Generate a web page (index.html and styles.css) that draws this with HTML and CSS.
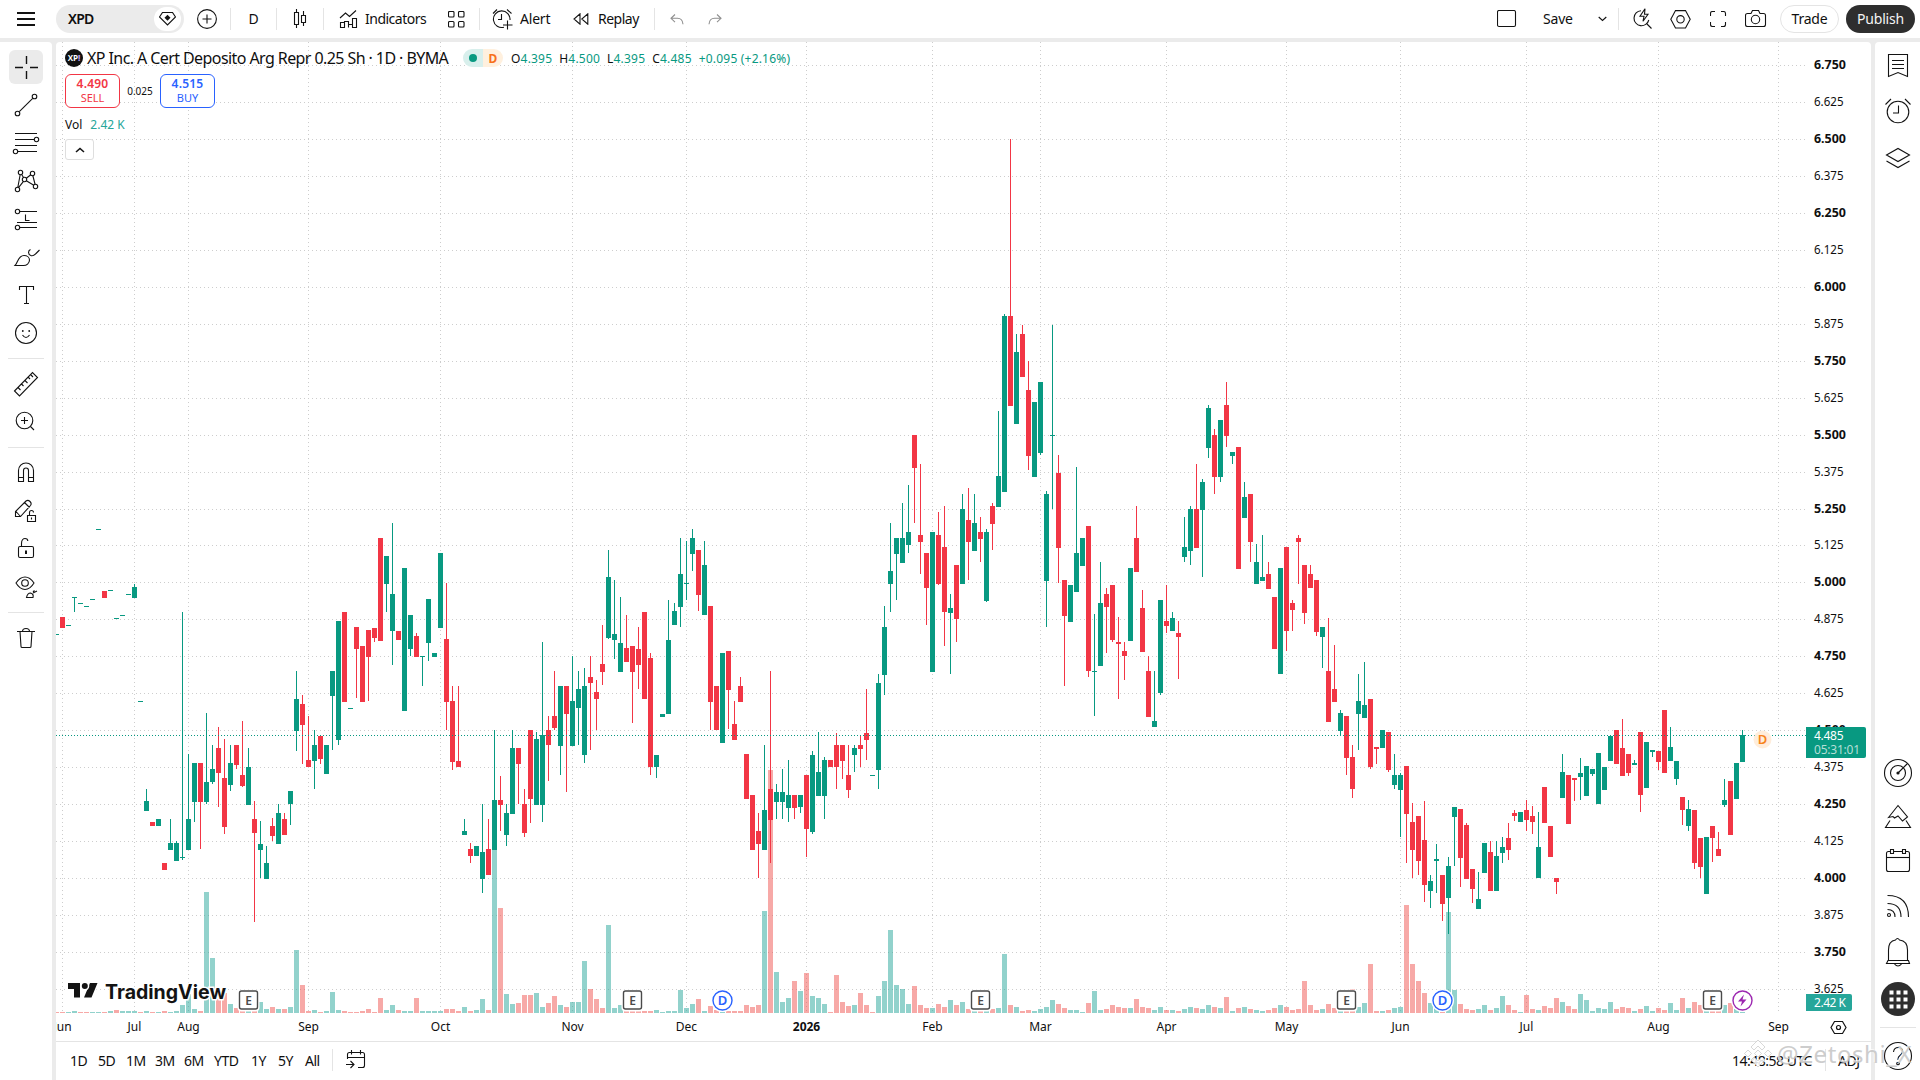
FILE: index.html
```html
<!DOCTYPE html>
<html lang="en">
<head>
<meta charset="utf-8">
<title>XPD 4.485 ▲ +2.16%</title>
<link rel="stylesheet" href="styles.css">
</head>
<body>
<div class="app">
  <header class="topbar">
    <button class="t-item menu"><svg width="20" height="16"><path class="thick" d="M1 2h18M1 8h18M1 14h18"/></svg></button>
    <div class="search"><span class="symbol">XPD</span><span class="gem"><svg width="17" height="14"><path d="M3.500 .5h10l3 4.500-8 8-8-8z"/><path class="fill" d="M8.500 2.800l3 3-3 3-3-3z"/></svg></span></div>
    <button class="t-item add"><svg width="20" height="20"><circle cx="10" cy="10" r="9.400"/><path d="M10 5.500v9M5.500 10h9"/></svg></button>
    <i class="vsep"></i>
    <button class="t-item interval"><span class="txt">D</span></button>
    <i class="vsep"></i>
    <button class="t-item kind"><svg width="14" height="20"><path d="M3.500 0v3M3.500 15v4M1.500 3.500h4v12h-4zM10.500 2v4M10.500 13v4M8.500 6.500h4v7h-4z"/></svg></button>
    <i class="vsep"></i>
    <button class="t-item indicators"><svg width="19" height="19"><path d="M1.500 17.500v-5h4v5zM5.500 17.500v-6h4v6M9.500 17.500v-3h4v3M13.500 17.500v-9h4v9zM1 8l5.500-5 4 3.500 6.500-6"/></svg><span class="txt">Indicators</span></button>
    <button class="t-item layouts"><svg width="17" height="17"><rect x=".5" y=".5" width="5.500" height="5.500" rx="1"/><rect x="10.500" y=".5" width="5.500" height="5.500" rx="1"/><rect x=".5" y="10.500" width="5.500" height="5.500" rx="1"/><rect x="10.500" y="10.500" width="5.500" height="5.500" rx="1"/></svg></button>
    <i class="vsep"></i>
    <button class="t-item alert"><svg width="21" height="21"><path d="M12 18.200A8.300 8.300 0 1 1 18 11M1 4.500l4-4M15 .5l4.500 4M9.500 5v5.500H6M15.500 11.500v9M11 16h9.500"/></svg><span class="txt">Alert</span></button>
    <button class="t-item replay"><svg width="16" height="12"><path d="M7 .8v10.400L1 6zM14.800 .8v10.400L8.800 6z"/></svg><span class="txt">Replay</span></button>
    <i class="vsep"></i>
    <button class="t-item undo"><svg width="14" height="11"><path d="M5 .5l-4 3.800 4 3.800M1 4.300h6.500q5 0 5.500 6"/></svg></button>
    <button class="t-item redo"><svg width="14" height="11"><path d="M9 .5l4 3.800-4 3.800M13 4.300H6.500q-5 0-5.500 6"/></svg></button>
    <span class="spring"></span>
    <button class="t-item single"><svg width="20" height="18"><rect x=".5" y=".5" width="18" height="16" rx="1.500"/></svg></button>
    <button class="t-item save"><span class="txt">Save</span></button>
    <button class="t-item caret"><svg width="9" height="6"><path d="M.7 1l3.800 3.500L8.300 1"/></svg></button>
    <i class="vsep"></i>
    <button class="t-item quick"><svg width="20" height="22"><path d="M8 2.700A7.500 7.500 0 1 0 15.800 12M14 16l4.500 4.500M12 .8L7 8.300h4l-1 5 5-7h-3.500z"/></svg></button>
    <button class="t-item settings"><svg width="21" height="19"><path d="M5.500 .6h10l4.700 8.700-4.700 8.700h-10L.8 9.300z"/><circle cx="10.500" cy="9.300" r="3.700"/></svg></button>
    <button class="t-item full"><svg width="17" height="17"><path d="M.5 5V2.500q0-2 2-2H5M11 .5h2.500q2 0 2 2V5M15.500 11v2.500q0 2-2 2H11M5 15.500H2.500q-2 0-2-2V11"/></svg></button>
    <button class="t-item camera"><svg width="22" height="18"><path d="M2.500 3.500H6l1.500-3h6l1.500 3h3.500q2 0 2 2v9q0 2-2 2h-16q-2 0-2-2v-9q0-2 2-2z"/><circle cx="10.500" cy="9.500" r="4.200"/></svg></button>
    <button class="pill trade"><span class="txt">Trade</span></button>
    <button class="pill publish"><span class="txt">Publish</span></button>
  </header>

  <div class="workspace">
    <nav class="tools">
      <button class="tool active"><svg><path class="mid" d="M17.500 6v8M17.500 21v8M6 17.500h8M21 17.500h8"/></svg></button>
      <button class="tool"><svg><circle cx="8.500" cy="25.500" r="2.300"/><circle cx="25.500" cy="8.500" r="2.300"/><path d="M10.300 23.700L23.700 10.300"/></svg></button>
      <button class="tool"><svg><path d="M6 7.500h22M6 13.500h19M6 19.500h22M9 25.500h19"/><circle cx="27.500" cy="13.500" r="2.200"/><circle cx="6.500" cy="25.500" r="2.200"/></svg></button>
      <button class="tool"><svg><path d="M11.200 10.500L8.800 23.500M12.500 10.300l2.200 3.500M9.500 23.700l5-6.300M17.300 14.300l4.500-3.500M23.800 11.500l2.300 9M17.300 16.700l7.500 4.600"/><circle cx="11.500" cy="8.500" r="2.200"/><circle cx="23.500" cy="9.500" r="2.200"/><circle cx="15.500" cy="15.500" r="2.200"/><circle cx="8.500" cy="25.500" r="2.200"/><circle cx="26.500" cy="22.500" r="2.200"/></svg></button>
      <button class="tool"><svg><path d="M10.500 9.500H28M16.500 12.500v6h4M8 20.500h20M10.500 25.500H28"/><circle cx="8.500" cy="9.500" r="2.200"/><circle cx="8.500" cy="25.500" r="2.200"/></svg></button>
      <button class="tool"><svg><path d="M6 25.500C9 22.500 9 15.500 15 15.500c3.200 0 5.500 2 5.500 4.500 0 3.500-3 5.500-6 5.500zM21.500 9.500c-2.500 1-3 5 .8 6.200 2 .6 3.700-1.200 4.700-2.200l3.500-3.500"/></svg></button>
      <button class="tool"><svg><path d="M10.500 12V8.500h14V12M17.500 8.500v17M15 25.500h5"/></svg></button>
      <button class="tool"><svg><circle cx="17" cy="17" r="10.500"/><path d="M13.500 19q3.500 5 7 0"/><circle class="fill" cx="13.800" cy="15" r=".9"/><circle class="fill" cx="20.200" cy="15" r=".9"/></svg></button>
      <i class="hsep"></i>
      <button class="tool"><svg><path d="M5.500 24L23.500 5.500l5 5L10.500 29zM9 20.500l2.500 2.500M12.500 17l2 2M16 13.500l2.500 2.500M19 10l2 2M22 8l2 2"/></svg></button>
      <button class="tool"><svg><circle cx="15.500" cy="15.500" r="8.300"/><path d="M21.500 21.500l3.500 3.500M15.500 12v7M12 15.500h7"/></svg></button>
      <i class="hsep"></i>
      <button class="tool"><svg><path d="M9.500 25.500v-11a7.500 7.500 0 0 1 15 0v11h-5v-11a2.500 2.500 0 0 0-5 0v11zM9.500 21.500h5M19.500 21.500h5"/></svg></button>
      <button class="tool"><svg><path d="M6.500 22.500v-5L17 7q2-1.500 4 .5t.5 4L11.500 22.500zM15.500 8.500l5 5M7 17.500l4.500 5"/><path class="paper" d="M18.500 21.500h8v6h-8zM20.500 21.500v-3q0-2 2-2t2 2M22.500 23.500v2"/></svg></button>
      <button class="tool"><svg><rect x="9.500" y="14.500" width="15" height="11" rx="1.500"/><path d="M12.500 14.500v-3c0-4 2-5 3.500-5s2.800 1 2.800 2.500"/><path class="thick" d="M17 18.500v3.500"/></svg></button>
      <button class="tool"><svg><path d="M7 13q4-6 9-6t9 6q-4 6.500-9 6.500T7 13z"/><circle cx="16" cy="13" r="3.300"/><path d="M17.500 27.500q1-4.500 4-4.500 3.500 1 2.500 4.500zM24 23l4-2M24 22l1.500-1.500"/></svg></button>
      <i class="hsep"></i>
      <button class="tool"><svg><path d="M8 10.500h18M11 10.500l1 15q0 1 1.200 1h7.600q1.200 0 1.200-1l1-15M13.500 10.500q0-3 3.500-3t3.500 3"/></svg></button>
    </nav>

    <main class="chart">
      <svg id="plot" class="plot" width="1815" height="999" viewBox="56 42 1815 999"></svg>
      <section class="legend">
        <div class="legend-title">
          <span class="logo">XP<b>!</b></span><h1>XP Inc. A Cert Deposito Arg Repr 0.25 Sh · 1D · BYMA</h1>
          <span class="status"><i class="open"><b></b></i><i class="delayed">D</i></span>
          <span class="ohlc"><span>O<b>4.395</b></span><span>H<b>4.500</b></span><span>L<b>4.395</b></span><span>C<b>4.485</b></span><b>+0.095 (+2.16%)</b></span>
        </div>
        <div class="quotes">
          <button class="quote sell"><strong>4.490</strong>SELL</button>
          <span class="spread">0.025</span>
          <button class="quote buy"><strong>4.515</strong>BUY</button>
        </div>
        <div class="vol">Vol<b>2.42 K</b></div>
        <button class="collapse"><svg width="10" height="6"><path class="bold" d="M1 5l4-3.500L9 5"/></svg></button>
      </section>
      <footer class="bottombar">
        <span class="r1">1D</span><span class="r2">5D</span><span class="r3">1M</span><span class="r4">3M</span><span class="r5">6M</span><span class="r6">YTD</span><span class="r7">1Y</span><span class="r8">5Y</span><span class="r9">All</span>
        <i class="vsep"></i>
        <svg class="goto" width="20" height="20"><path d="M1.500 9V4.500q0-2 2-2h13q2 0 2 2v11q0 2-2 2H12M1.500 7.500h17M5.500 0v4.500M14.500 0v4.500M0 14.500h7.500M4.500 11l3.500 3.500L4.500 18"/></svg>
        <span class="spring"></span>
        <span class="clock">14:48:58 UTC</span><i class="vsep short"></i><span class="adj">ADJ</span>
      </footer>
    </main>

    <aside class="side">
      <button><svg><path d="M13.500 11.500h19v22l-9.500-4-9.500 4zM17 17.500h12M17 21.500h12M17 25.500h12"/></svg></button>
      <button><svg><circle cx="23" cy="23" r="10.800"/><path d="M23.500 16.500v7.500H18M10.500 15.500l5.500-5.500M30 10l5.500 5.500"/></svg></button>
      <button><svg><path d="M11.500 21L23 14.500 34.500 21 23 27.500zM11.500 27L23 33.500 34.500 27"/></svg></button>
      <span class="spring"></span>
      <button><svg><circle cx="23" cy="22" r="13.500"/><circle cx="23" cy="22" r="7.500"/><circle class="fill" cx="23" cy="22" r="1.600"/><path d="M23 22l9.500-9.500"/></svg></button>
      <button><svg><path d="M13.500 22.500L23 10.500l9.500 11.500-5 4-4.500-5-3.500 2-1.500-1.500zM15 25.500l-4.500 7h25l-4.500-7"/></svg></button>
      <button><svg><rect x="11.500" y="12.500" width="23" height="20" rx="2"/><path d="M11.500 18.500h23"/><path class="paper" d="M15.500 10.500h3v4h-3zM27.500 10.500h3v4h-3z"/></svg></button>
      <button><svg><circle cx="14" cy="32" r="1.500"/><path d="M12.500 26.500q7.500 0 7.500 7.500M12.500 20.500q13.500 0 13.500 13.500M12.500 12.500q21 0 21 21.500"/></svg></button>
      <button class="bell"><svg><path d="M13.500 33.500V23q0-9 7-10 2-3 4 0 8 1 8 10v10.500M13 33.500h20.500l1 3H11.500zM19.500 37q3.500 4 7 0"/></svg></button>
      <button class="apps"><svg><circle class="disc" cx="23" cy="28" r="17"/><g class="dots"><path d="M14.500 19.500h4v4h-4zM21.500 19.500h4v4h-4zM28.500 19.500h4v4h-4zM14.500 26.500h4v4h-4zM21.500 26.500h4v4h-4zM28.500 26.500h4v4h-4zM14.500 33.500h4v4h-4zM21.500 33.500h4v4h-4zM28.500 33.500h4v4h-4z"/></g></svg></button>
      <i class="hsep"></i>
      <button class="help"><svg><circle cx="23" cy="28" r="13.500"/><path d="M18.500 24q.5-4.500 4.800-4.500 4.200 0 4.200 4 0 2.200-2.500 4-2 1.500-2 3.500v1"/><circle cx="23" cy="35.500" r="1.300"/></svg></button>
    </aside>
  </div>
  <div class="stamp"><svg width="30" height="30"><path d="M15 1l7 7-3 3-4-4-4 4-3-3zM5 11l3.500 3.500L5 18l-3.500-3.500zM25 11l3.500 3.500L25 18l-3.500-3.500zM15 11l3.500 3.500L15 18l-3.500-3.500zM8 21l3-3 4 4 4-4 3 3-7 7z"/></svg><span>@Zetoshi_X</span></div>
</div>
<script src="chart.js"></script>
</body>
</html>
```
FILE: styles.css
```css
* { box-sizing: border-box; }
body { margin: 0; width: 1920px; height: 1080px; overflow: hidden; background: #ebebeb; color: #0f0f0f; font-family: "Noto Sans", "Open Sans", sans-serif; font-stretch: 87.5%; }
button { border: 0; padding: 0; margin: 0; background: none; font: inherit; color: inherit; display: flex; align-items: center; flex: none; }
svg { display: block; flex: none; fill: none; stroke: #131313; stroke-width: 1.1; }
svg .thick { stroke-width: 2; }
svg .mid { stroke-width: 1.4; }
svg .bold { stroke-width: 1.6; }
svg .fill { fill: #131313; stroke: none; }
svg .paper { fill: #fff; }
.app { position: relative; width: 1920px; height: 1080px; display: flex; flex-direction: column; gap: 4px; }
.spring { flex: 1; }
.vsep { width: 1px; height: 22px; background: #e4e4e4; flex: none; }
.hsep { width: 36px; height: 1px; background: #e4e4e4; flex: none; }

.topbar { height: 38px; background: #fff; display: flex; align-items: center; font-size: 14px; padding-right: 5px; }
.txt { display: block; white-space: nowrap; letter-spacing: -.2px; padding-bottom: 1px; }
.menu { width: 56px; padding-left: 16px; }
.search { width: 128px; height: 28px; border-radius: 14px; background: #ebebeb; display: flex; align-items: center; justify-content: space-between; padding: 0 3px 0 12px; flex: none; }
.symbol { font-weight: 600; letter-spacing: -.8px; padding-bottom: 1px; }
.gem { width: 27px; height: 24px; border-radius: 12px; background: #fff; display: flex; align-items: center; justify-content: center; }
.add { width: 46px; justify-content: center; padding-right: 1px; }
.interval { width: 45px; justify-content: center; }
.kind { width: 46px; justify-content: center; }
.indicators { width: 114px; padding-left: 15px; gap: 7px; }
.indicators .txt { letter-spacing: -.5px; }
.layouts { width: 41px; padding-left: 10px; }
.alert { width: 82px; padding-left: 12px; gap: 7px; }
.replay { width: 92px; padding-left: 11px; gap: 9px; }
.replay .txt { letter-spacing: -.5px; }
.undo { width: 38px; padding-left: 15px; }
.redo { width: 38px; padding-left: 15px; }
.undo svg, .redo svg { stroke: #8f8f8f; }
.single { width: 46px; }
.save { width: 55px; }
.caret { width: 20px; }
.quick { width: 37px; padding-left: 14px; }
.settings { width: 40px; padding-left: 14px; }
.full { width: 36px; padding-left: 14px; }
.camera { width: 48px; padding-left: 13px; }
.pill { height: 28px; border-radius: 14px; justify-content: center; }
.trade { width: 59px; border: 1px solid #e4e4e4; margin-right: 7px; }
.publish { width: 69px; background: #2e2e2e; color: #f5f5f5; }

.workspace { flex: 1; display: flex; gap: 4px; min-height: 0; }
.tools { width: 52px; background: #fff; border-radius: 0 4px 0 0; display: flex; flex-direction: column; align-items: center; gap: 4px; padding-top: 8px; }
.tools .hsep { margin: 4px 0; }
.tool { width: 34px; height: 34px; border-radius: 6px; }
.tool.active { background: #ebebeb; }
.tool svg { width: 34px; height: 34px; }
.side { width: 45px; background: #fff; border-radius: 4px 0 0 0; display: flex; flex-direction: column; align-items: center; padding-top: 1px; }
.side button, .side button svg { width: 45px; height: 44px; }
.side button:nth-child(2) { margin-top: 2px; }
.side button:nth-child(3) { margin-top: 1px; }
.side .bell svg { overflow: visible; }
.side .apps, .side .apps svg { height: 56px; }
.side .help, .side .help svg { height: 52px; }
.disc { fill: #2e2e2e; stroke: none; }
.dots { fill: #fff; stroke: none; }

.chart { position: relative; width: 1815px; background: #fff; border-radius: 4px 4px 0 0; display: flex; flex-direction: column; }
.plot { stroke: none; }
.plot text { font-size: 12px; fill: #0f0f0f; stroke: none; }
.plot .strong { font-weight: 700; }
.plot .hgrid, .plot .vgrid { stroke: #cdcdcd; stroke-width: 1; stroke-dasharray: 1 3; }
.plot .last { stroke: #089981; stroke-width: 1; stroke-dasharray: 1 2; }
.plot .up { fill: #089981; }
.plot .down { fill: #f23645; }
.plot .vup { fill: #26a69a; opacity: .5; }
.plot .vdown { fill: #ef5350; opacity: .5; }
.plot .brand { font: 700 20px Inter, sans-serif; fill: #131313; stroke: #fff; stroke-width: 3; paint-order: stroke; }
.plot .mark { fill: #131313; stroke: #fff; stroke-width: 3; paint-order: stroke; }
.plot .flag { fill: #fff; stroke: #4a4a4a; stroke-width: 1.4; }
.plot .halo { fill: #fff; }
.plot .flag-d { stroke: #2962ff; }
.plot .flag-z { stroke: #9c27b0; }
.plot .badge-text { font-size: 12px; font-weight: 600; fill: #4a4a4a; text-anchor: middle; }
.plot .badge-text.blue { fill: #2962ff; font-size: 13px; }
.plot .badge-text.orange { fill: #f7831b; font-size: 13px; }
.plot .bolt { fill: #9c27b0; }
.plot .cream { fill: #ffeddb; }
.plot .teal { fill: #26a69a; }
.plot .on { fill: #fff; }
.plot .dim { fill: #b5ded6; }
.plot .gear { fill: none; stroke: #131313; stroke-width: 1.2; }

.legend { position: absolute; left: 9px; top: 6px; }
.legend-title { display: flex; align-items: center; height: 20px; }
.logo { width: 18px; height: 18px; border-radius: 9px; background: #111; color: #fff; font: 700 8px/18px "Open Sans", sans-serif; text-align: center; }
.logo b { color: #b59af0; }
h1 { margin: 0 0 0 4px; width: 376px; font-size: 16px; font-weight: 400; letter-spacing: -.58px; white-space: nowrap; }
.status { display: flex; width: 40px; height: 18px; border-radius: 9px; overflow: hidden; font-size: 12px; }
.status i { width: 20px; display: flex; align-items: center; justify-content: center; font-style: normal; font-weight: 700; }
.open { background: #d8efec; }
.open b { width: 8px; height: 8px; border-radius: 4px; background: #089981; }
.delayed { background: #fff0de; color: #f7701b; }
.ohlc { display: flex; gap: 7px; margin-left: 8px; font-size: 12px; letter-spacing: .2px; white-space: nowrap; }
.ohlc b, .vol b { font-weight: 400; color: #089981; }
.quotes { display: flex; align-items: center; margin-top: 6px; }
.quote { width: 55px; height: 34px; flex-direction: column; justify-content: center; border: 1px solid; border-radius: 6px; background: #fff; font-size: 11px; line-height: 14px; }
.quote strong { font-size: 12px; font-weight: 600; letter-spacing: .2px; }
.sell { color: #f23645; }
.buy { color: #2962ff; }
.spread { width: 40px; text-align: center; font-size: 10px; }
.vol { margin-top: 8px; font-size: 12px; line-height: 18px; }
.vol b { margin-left: 8px; color: #26a69a; }
.collapse { margin-top: 5px; width: 29px; height: 21px; border: 1px solid #dedede; border-radius: 3px; background: #fff; justify-content: center; }

.bottombar { height: 39px; border-top: 1px solid #e4e4e4; display: flex; align-items: center; font-size: 14px; letter-spacing: -.5px; white-space: nowrap; padding-left: 14px; padding-right: 9px; padding-bottom: 2px; }
.bottombar span:not(.spring) { flex: none; }
.r1, .r2 { width: 28px; } .r3, .r4 { width: 29px; } .r5 { width: 30px; } .r6 { width: 37px; } .r7, .r8 { width: 27px; } .r9 { width: 27px; }
.goto { margin-left: 13px; }
.clock { width: 93px; }
.short { height: 22px; margin-right: 12px; }
.adj { width: 24px; }
.stamp { position: absolute; left: 1743px; top: 1037px; width: 177px; display: flex; align-items: center; gap: 4px; overflow: hidden; color: rgba(196,196,196,.85); font-family: "Noto Sans", sans-serif; font-size: 24px; letter-spacing: .6px; line-height: 34px; text-shadow: -1px -1px 0 rgba(255,255,255,.8); white-space: nowrap; }
.stamp svg { stroke: #bdbdbd; stroke-width: .6; fill: rgba(255,255,255,.85); }
```
FILE: chart.js
```js
// Each block holds consecutive daily bars: [up, high, bodyTop, bodyBottom, low],
// measured downwards from `top` at `unit` steps per pixel.
const blocks = [
  { first: -1, top: 500, unit: 2.904, bars: [
    [1,390,390,392,392],[0,340,340,372,372],[1,363,363,366,366],[1,283,283,285,325],[1,299,299,302,302],[1,308,308,311,311],
    [1,287,287,290,290],[1,84,84,87,87],[0,264,264,285,285],[1,261,261,264,264],[1,343,343,346,346],[1,334,334,337,337],
    [1,273,273,276,276],[1,244,253,285,285],[1,584,584,587,587],[1,839,874,903,903],[0,935,935,947,947],[1,926,926,947,947],
    [0,1054,1054,1074,1074],[1,926,996,1016,1016],[1,990,996,1048,1048],[1,325,1037,1040,1045],[1,738,926,1016,1016],
    [1,764,764,877,935],[0,764,764,877,1013],[1,618,819,877,883],[1,711,781,819,825],[0,659,720,793,891],[0,694,807,950,970],
    [1,711,764,828,845],[0,711,711,769,781],[0,642,799,830,833],[1,720,775,886,886],[0,874,926,967,1225],[1,932,999,1016,1098],
    [1,1005,1054,1101,1101],[0,923,947,976,990],[1,883,909,999,999],[0,909,926,973,973],[1,845,845,883,944],[1,497,578,671,729],
    [0,566,592,653,767],[0,627,755,775,775],[1,668,711,758,839],[0,685,685,752,767],[1,711,711,796,796],[1,497,497,569,726],
    [1,351,351,697,711],[0,325,325,587,587],[1,604,604,607,607],[0,369,369,433,575],[0,424,424,587,587],[0,377,377,456,584],
    [0,372,372,401,412],[0,110,110,409,409],[1,163,163,244,325],[1,67,273,380,479],[0,380,380,407,407],[1,197,197,613,613],
    [1,334,334,433,453],[0,386,395,456,456],[1,453,453,456,540],[1,287,287,415,467],[1,444,444,456,456],[1,154,154,372,372],
    [0,241,404,587,668],[0,540,584,761,784],[0,540,758,775,775],[1,926,961,973,973],[0,996,1013,1034,1054],[1,1005,1005,1034,1034],
    [1,883,1022,1101,1141],[0,926,1013,1089,1089],[1,668,871,1016,1016],[0,801,871,886,961],[1,883,909,973,1005],[1,668,720,912,912],
    [0,720,720,767,883],[0,839,883,967,979],[0,668,668,868,938],[1,674,694,886,886],[1,412,682,886,935],[0,627,668,711,816],
    [0,497,627,662,668],[1,540,540,714,799],[0,540,540,621,848],[1,453,584,714,714],[1,497,549,604,711],[1,488,540,740,764],
    [0,453,514,531,726],[0,523,558,578,668],[0,363,476,499,537],[1,145,224,401,404],[1,232,389,407,462],[1,282,415,499,499],
    [0,334,430,470,470],[0,424,424,499,648],[0,369,433,479,549],[0,325,325,578,578],[0,444,459,775,799],[1,740,740,775,807],
    [1,621,621,630,630],[1,290,407,621,621],[1,299,322,363,363],[1,110,215,311,369],[1,119,241,244,290],[1,84,110,157,206],
    [0,145,145,276,322],[1,119,189,334,334],[0,308,308,587,668],[0,540,540,668,668],[1,444,444,706,706],[0,438,438,552,665],
    [0,584,650,697,697],[0,514,540,587,587],[0,738,738,868,868],[0,857,857,1016,1016],[0,909,961,999,1098]] },
  { first: 117, top: 420, unit: 2.6133, bars: [
    [1,849,1019,1124,1124],[0,656,964,1045,1158],[1,951,972,998,1043],[1,912,972,998,1043],[1,889,980,1014,1051],[0,980,980,1014,1043],
    [1,980,980,1011,1027],[0,928,928,1069,1142],[1,865,875,1077,1082],[1,815,920,983,983],[1,881,889,983,1043],[0,889,889,907,907],
    [0,818,849,907,964],[0,849,849,891,938],[0,849,928,967,988],[1,849,857,875,920],[0,826,849,860,907],[0,703,818,836,889],
    [1,928,928,930,930],[1,664,687,915,964],[1,486,541,666,719],[1,269,395,429,502],[1,308,308,350,470],[1,217,308,374,374],
    [1,170,293,327,348],[0,39,39,125,269],[0,115,301,319,402],[0,348,348,439,536],[1,293,293,659,659],[0,240,301,429,431],
    [0,225,332,502,591],[1,455,491,504,664],[0,379,379,520,580],[1,193,233,429,429],[0,178,261,319,418],[1,193,269,342,342],
    [0,253,293,311,371],[1,285,293,473,476],[0,217,225,272,340]] },
  { first: 156, top: 120, unit: 2.529, bars: [
    [1,736,900,979,979],[1,491,496,941,941],[0,48,496,723,723],[1,541,587,769,769],[0,518,541,650,650],[0,609,683,850,885],
    [1,713,713,903,903],[1,663,663,842,847],[1,938,946,1166,1282],[1,518,797,799,984],[0,847,893,1082,1171],[0,1163,1163,1254,1431],
    [1,1176,1176,1270,1270],[1,878,1095,1194,1194],[1,1057,1057,1128,1128],[0,1027,1027,1393,1409],[1,1249,1393,1396,1507],
    [1,1118,1222,1381,1381],[0,1184,1199,1232,1348],[0,1176,1176,1315,1320],[0,1257,1320,1325,1464],[0,1320,1343,1356,1416],
    [1,1133,1133,1318,1318],[0,976,1057,1143,1143],[0,1189,1234,1345,1345],[0,1356,1393,1510,1510],[1,1393,1520,1535,1535],
    [1,1214,1214,1449,1454],[0,1176,1267,1280,1297],[1,1244,1259,1292,1292],[0,1267,1297,1308,1414],[1,1004,1080,1105,1118],
    [1,976,984,1090,1125],[0,870,984,1082,1082],[1,908,916,986,1156],[1,721,728,830,855],[0,781,797,903,946],[1,759,759,903,916],
    [0,663,721,799,827],[1,840,840,850,870],[0,827,827,1136,1136],[1,916,953,1007,1007],[0,946,946,1067,1118],[1,1072,1118,1173,1173],
    [1,1050,1156,1166,1166],[0,1118,1148,1186,1186],[0,1206,1206,1338,1338],[1,1133,1133,1401,1401],[0,1080,1080,1292,1343],
    [0,1214,1222,1239,1292],[0,1050,1057,1067,1173],[0,1125,1125,1247,1275],[0,1125,1148,1184,1184],[0,1163,1163,1295,1305],
    [1,1282,1282,1308,1386],[0,1259,1393,1522,1522],[0,1328,1439,1472,1472]] },
  { first: 213, top: 500, unit: 2.904, bars: [
    [1,610,618,671,685],[0,627,627,749,799],[0,711,746,839,865],[1,505,584,621,726],[1,470,595,633,633],[0,578,578,775,781],
    [0,717,717,723,767],[1,668,668,720,720],[0,674,674,784,790],[1,738,799,828,839],[1,793,799,842,979],[0,772,772,912,1054],
    [0,880,935,1016,1098],[0,918,918,1048,1089],[0,874,987,1118,1167],[1,1089,1106,1135,1185],[1,999,1042,1048,1141],
    [0,1089,1089,1173,1222],[1,1037,1063,1156,1260],[1,891,891,920,1063],[0,897,897,1040,1124],[0,938,944,1101,1101],
    [0,1071,1071,1130,1170],[1,1080,1159,1188,1188],[1,996,996,1083,1083],[0,990,1022,1135,1135],[1,990,1034,1135,1135],
    [1,979,1008,1025,1054],[0,938,981,1016,1045],[0,900,909,918,932],[1,906,906,935,935],[0,871,900,929,961],[0,889,918,935,970],
    [1,906,1008,1098,1098],[0,833,833,938,938],[0,947,947,1037,1037],[0,1098,1098,1109,1144]] },
  { first: 250, top: 680, unit: 3, bars: [
    [1,222,276,354,354],[0,285,285,432,432],[0,294,294,300,363],[1,234,279,291,360],[1,258,258,348,348],[1,267,267,282,288],
    [1,219,219,372,372],[1,261,261,330,330],[1,168,168,243,243],[0,150,150,252,252],[0,117,204,288,288],[0,222,222,279,288],
    [1,240,249,255,255],[0,156,156,345,396],[1,186,186,324,324],[1,210,210,216,231],[0,213,213,246,270],[0,90,90,279,279],
    [1,141,201,243,243],[1,243,243,297,315],[0,351,351,390,435],[1,360,387,438,453],[0,390,390,549,567],[0,474,474,561,594],
    [1,471,471,642,642],[0,438,438,474,546],[0,456,507,528,528],[1,297,360,375,381],[0,303,303,465,465],[1,249,249,357,357],
    [1,150,165,246,246]] }
];

// Volume bars from the first one on; a negative height is a falling day.
const volumes = [-1,-1,1,2,-1,-1,1,1,-1,2,-3,2,2,2,-1,2,-1,1,-2,1,2,8,19,4,-2,121,55,-14,-20,9,-5,-4,2,-4,11,4,-6,4,-4,6,63,-28,-2,
  3,-1,2,21,3,-2,-1,-1,-2,-4,-1,-15,3,8,-3,2,2,-15,2,2,2,2,-4,-4,-2,6,-2,3,14,-3,163,-105,19,9,-10,-18,-18,20,6,-10,-17,8,-6,11,11,
  52,-24,-14,-5,88,5,8,-3,-3,-3,-2,-2,3,1,2,2,23,5,9,-14,2,-7,-3,1,-2,-2,-2,-8,-6,-8,102,-243,41,11,15,-32,22,-40,17,15,9,-1,-38,-11,-7,
  8,-20,-8,-1,17,32,83,28,24,9,-27,-8,-5,5,-9,-6,13,-8,11,-4,2,-2,3,-4,5,59,-8,6,-2,-3,2,4,6,13,-9,-5,3,3,1,-10,22,3,
  -4,-8,-6,-5,5,-14,-6,-5,3,6,-3,3,-2,4,6,-5,4,8,-6,5,-16,2,-5,6,-4,3,2,-3,-5,8,-6,-3,-4,-32,-8,-3,
  4,-9,-5,3,-3,-24,6,10,-49,-2,2,-3,5,6,-108,-49,-32,-20,10,5,-1,101,23,-9,-4,-3,4,8,-3,5,17,-8,-3,1,-18,-4,3,-7,-5,-15,
  11,-7,-4,19,13,2,5,4,11,-4,-6,-5,2,-4,7,2,-5,-3,10,3,-15,5,-11,-8,3,-4,-3,8,-10,4,3];

const months = [[0,'Jun'],[12,'Jul'],[21,'Aug'],[41,'Sep'],[63,'Oct'],[85,'Nov'],[104,'Dec'],[124,'2026'],[145,'Feb'],[163,'Mar'],
  [184,'Apr'],[204,'May'],[223,'Jun'],[244,'Jul'],[266,'Aug'],[286,'Sep']];
const x = i => 62 + 6 * i;
const out = [];
const rect = (c, l, t, w, h) => out.push(`<rect class="${c}" x="${l}" y="${t}" width="${w}" height="${h}"/>`);

out.push('<clipPath id="pane"><rect x="56" y="42" width="1750" height="999"/></clipPath><g clip-path="url(#pane)">');
for (let k = 0; k <= 25; k++) {
  const y = Math.round(65 + 36.96 * k) + .5;
  out.push(`<path class="hgrid" d="M56 ${y}H1806"/>`);
}
months.forEach(([i]) => out.push(`<path class="vgrid" d="M${x(i) + .5} 42V1012"/>`));
volumes.forEach((v, n) => rect(v > 0 ? 'vup' : 'vdown', x(n - 1) - 2, 1013 - Math.abs(v), 5, Math.abs(v)));
blocks.forEach(b => b.bars.forEach(([up, hi, bt, bb, lo], n) => {
  const y = v => Math.round(b.top + v / b.unit), cx = x(b.first + n), c = up ? 'up' : 'down';
  if (lo > bb || hi < bt) rect(c, cx, y(hi), 1, y(lo) - y(hi));
  rect(c, cx - 2, y(bt), 5, Math.max(1, y(bb) - y(bt)));
}));
out.push('<path class="last" d="M56 735.500H1806"/>');
months.forEach(([i, name]) => out.push(`<text x="${x(i) + .5}" y="1031" text-anchor="middle"${name === '2026' ? ' class="strong"' : ''}>${name}</text>`));

out.push('<g transform="translate(68 983)"><path class="mark" d="M0 0h12v14.500H6V6H0zM22 0h7.500l-6 14.500H16z"/><circle class="mark" cx="16.800" cy="3" r="3"/></g>');
out.push('<text class="brand" x="105" y="999" textLength="121" lengthAdjust="spacingAndGlyphs">TradingView</text>');

[31, 95, 153, 214, 275].forEach(i => out.push(`<rect class="halo" x="${x(i) - 10.500}" y="989.500" width="22" height="22" rx="4"/><rect class="flag" x="${x(i) - 8.500}" y="991" width="18" height="18" rx="2"/><text class="badge-text" x="${x(i) + .5}" y="1004.500">E</text>`));
[110, 230].forEach(i => out.push(`<circle class="halo" cx="${x(i) + .5}" cy="1000.500" r="11.500"/><circle class="flag flag-d" cx="${x(i) + .5}" cy="1000.500" r="9.500"/><text class="badge-text blue" x="${x(i) + .5}" y="1005">D</text>`));
out.push(`<circle class="halo" cx="1742.500" cy="1000.500" r="11.500"/><circle class="flag flag-z" cx="1742.500" cy="1000.500" r="9.500"/><path class="bolt" d="M1744 994.500l-6 7h4l-1.500 5 6-7h-4z"/>`);
out.push('<circle class="cream" cx="1762.500" cy="739.500" r="9"/><text class="badge-text orange" x="1762.500" y="744">D</text></g>');

for (let k = 0; k <= 25; k++) {
  const p = 6.75 - k * .125, bold = k % 2 === 0;
  out.push(`<text x="1814" y="${Math.round(65 + 36.96 * k) + 4}" class="${bold ? 'strong' : ''}" textLength="${bold ? 32 : 29.500}" lengthAdjust="spacingAndGlyphs">${p.toFixed(3)}</text>`);
}
out.push('<path class="up" d="M1806 727h58q2 0 2 2v27q0 2-2 2h-58z"/><text class="on" x="1814" y="740" textLength="29.500">4.485</text><text class="dim" x="1814" y="754" textLength="46">05:31:01</text>');
out.push('<path class="teal" d="M1806 994h44q2 0 2 2v13q0 2-2 2h-44z"/><text class="on" x="1814" y="1007" textLength="32">2.42 K</text>');
out.push('<g class="gear"><path d="M1834.500 1021.500h8l3.500 6-3.500 6h-8l-3.500-6z"/><circle cx="1838.500" cy="1027.500" r="2"/></g>');
document.getElementById('plot').innerHTML = out.join('');
```
